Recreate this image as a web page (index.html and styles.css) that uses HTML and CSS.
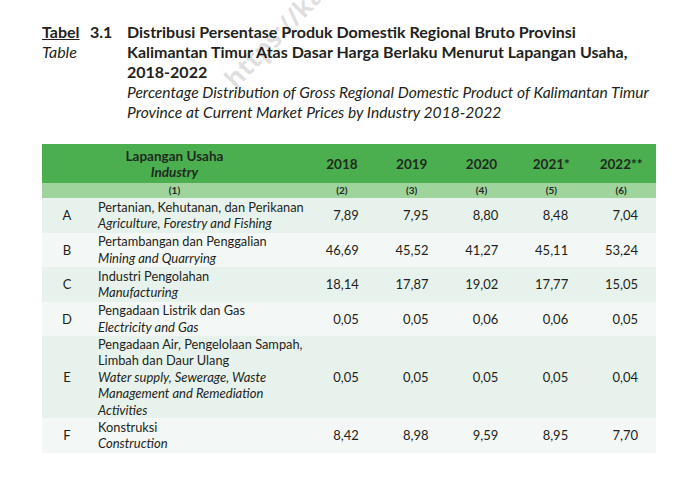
FILE: index.html
```html
<!DOCTYPE html>
<html>
<head>
<meta charset="utf-8">
<link rel="stylesheet" href="styles.css">
</head>
<body>
<div class="page">
  <div class="watermark">https://kaltim.bps.go.id</div>
  <div class="title">
    <div class="lbl">
      <div class="lbl-row"><span class="tabel">Tabel</span><span class="num">3.1</span></div>
      <div class="lbl-en">Table</div>
    </div>
    <div class="ttl">
      <div class="ttl-id">Distribusi Persentase Produk Domestik Regional Bruto Provinsi Kalimantan Timur Atas Dasar Harga Berlaku Menurut Lapangan Usaha, 2018-2022</div>
      <div class="ttl-en">Percentage Distribution of Gross Regional Domestic Product of Kalimantan Timur Province at Current Market Prices by Industry 2018-2022</div>
    </div>
  </div>
  <table class="tbl">
    <colgroup>
      <col class="c-code"><col class="c-desc"><col class="c-yr"><col class="c-yr"><col class="c-yr"><col class="c-yr"><col class="c-yr">
    </colgroup>
    <thead>
      <tr class="hd">
        <th colspan="2">Lapangan Usaha<br><i>Industry</i></th>
        <th>2018</th><th>2019</th><th>2020</th><th>2021*</th><th>2022**</th>
      </tr>
      <tr class="sub">
        <th colspan="2">(1)</th><th>(2)</th><th>(3)</th><th>(4)</th><th>(5)</th><th>(6)</th>
      </tr>
    </thead>
    <tbody>
      <tr class="odd"><td class="code">A</td><td class="desc">Pertanian, Kehutanan, dan Perikanan<br><i>Agriculture, Forestry and Fishing</i></td><td>7,89</td><td>7,95</td><td>8,80</td><td>8,48</td><td>7,04</td></tr>
      <tr class="even"><td class="code">B</td><td class="desc">Pertambangan dan Penggalian<br><i>Mining and Quarrying</i></td><td>46,69</td><td>45,52</td><td>41,27</td><td>45,11</td><td>53,24</td></tr>
      <tr class="odd"><td class="code">C</td><td class="desc">Industri Pengolahan<br><i>Manufacturing</i></td><td>18,14</td><td>17,87</td><td>19,02</td><td>17,77</td><td>15,05</td></tr>
      <tr class="even"><td class="code">D</td><td class="desc">Pengadaan Listrik dan Gas<br><i>Electricity and Gas</i></td><td>0,05</td><td>0,05</td><td>0,06</td><td>0,06</td><td>0,05</td></tr>
      <tr class="odd"><td class="code">E</td><td class="desc">Pengadaan Air, Pengelolaan Sampah,<br>Limbah dan Daur Ulang<br><i>Water supply, Sewerage, Waste<br>Management and Remediation<br>Activities</i></td><td>0,05</td><td>0,05</td><td>0,05</td><td>0,05</td><td>0,04</td></tr>
      <tr class="even"><td class="code">F</td><td class="desc">Konstruksi<br><i>Construction</i></td><td>8,42</td><td>8,98</td><td>9,59</td><td>8,95</td><td>7,70</td></tr>
    </tbody>
  </table>
</div>
</body>
</html>
```
FILE: styles.css
```css
* { box-sizing: border-box; }
html, body { margin: 0; padding: 0; background: #fff; }
body { font-family: Lato, "Open Sans", sans-serif; color: #231f20; }
.page { position: relative; width: 700px; height: 477px; padding: 22px 0 0 42px; overflow: hidden; }
.watermark {
  position: absolute; left: 238px; top: 66px;
  transform: rotate(-46deg); transform-origin: 0 100%;
  font-family: "Open Sans", sans-serif;
  font-size: 26px; line-height: 26px; font-weight: 700; color: rgba(0,0,0,0.13);
  white-space: nowrap; z-index: 2; pointer-events: none;
}
.title { display: flex; font-size: 16px; line-height: 20px; }
.lbl { width: 85px; flex: none; }
.lbl-row { display: flex; font-weight: 700; }
.tabel { text-decoration: underline; width: 48px; }
.lbl-en { font-style: italic; }
.ttl { width: 545px; }
.ttl-id { font-weight: 700; width: 530px; }
.ttl-en { font-style: italic; font-size: 15.6px; }
.tbl { margin-top: 22px; border-collapse: collapse; table-layout: fixed; width: 614px; font-size: 12.8px; line-height: 16.4px; }
.tbl i { font-size: 13px; }
.c-code { width: 50px; }
.c-desc { width: 215px; }
.c-yr { width: 69.8px; }
.tbl th { font-weight: 700; padding: 0; text-align: center; }
.hd th { background: #4caf4f; height: 39px; color: #1f2a1f; font-size: 13.5px; line-height: 16px; }
.hd th i { font-size: 13.5px; }
.sub th { background: #9fd59c; height: 15px; font-size: 10px; line-height: 15px; color: #1f2a1f; }
.tbl td { padding: 0 18px 0 0; text-align: right; vertical-align: middle; height: 34.5px; font-size: 13px; }
.tbl td.code { text-align: center; padding: 0; }
.tbl td.desc { text-align: left; padding: 0 0 0 6px; font-size: 12.8px; }
.odd td { background: #e7f2ec; }
.even td { background: #f3f8f6; }
```
